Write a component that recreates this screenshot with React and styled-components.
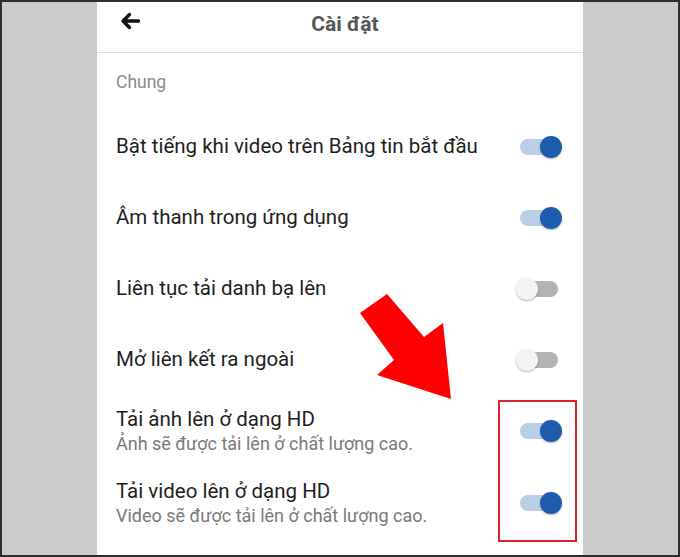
import React from "react";
import styled, { createGlobalStyle } from "styled-components";

const Global = createGlobalStyle`
  html, body { margin: 0; padding: 0; }
  body { font-family: Roboto, "Noto Sans", sans-serif; }
`;

const Frame = styled.div`
  width: 680px;
  height: 557px;
  box-sizing: border-box;
  border: 2px solid #2e2e2e;
  background: #cccccc;
  display: flex;
  overflow: hidden;
`;

const Panel = styled.div`
  position: relative;
  margin-left: 95px;
  width: 486px;
  background: #ffffff;
  display: flex;
  flex-direction: column;
`;

const Header = styled.div`
  height: 50px;
  border-bottom: 1px solid #dcdcdc;
  display: flex;
  align-items: center;
  position: relative;
  justify-content: center;
`;

const Back = styled.div`
  position: absolute;
  left: 22px;
  top: 8px;
  width: 22px;
  height: 22px;
  display: flex;
`;

const Title = styled.div`
  font-size: 21px;
  font-weight: 700;
  color: #565656;
  margin-left: 10px;
  margin-top: -7px;
`;

const SectionLabel = styled.div`
  height: 58px;
  display: flex;
  align-items: center;
  padding-left: 19px;
  font-size: 17.5px;
  color: #8a8a8a;
`;

const Row = styled.div`
  height: ${(p) => (p.$tall ? 72 : 71)}px;
  display: flex;
  align-items: center;
  justify-content: space-between;
  padding: 0 21px 0 19px;
`;

const Texts = styled.div`
  display: flex;
  flex-direction: column;
  gap: 3px;
`;

const Label = styled.div`
  font-size: 20.5px;
  color: #1e1e1e;
  line-height: 23px;
`;

const Sub = styled.div`
  font-size: 18px;
  color: #7a7a7a;
  line-height: 20px;
`;

const Switch = styled.div`
  position: relative;
  width: 46px;
  height: 24px;
  flex-shrink: 0;
  display: flex;
  align-items: center;
  justify-content: center;
`;

const Track = styled.div`
  width: 38px;
  height: 16px;
  border-radius: 8px;
  background: ${(p) => (p.$on ? "#bccde6" : "#b3b3b3")};
`;

const Knob = styled.div`
  position: absolute;
  top: 1px;
  left: ${(p) => (p.$on ? "24px" : "0px")};
  width: 22px;
  height: 22px;
  border-radius: 50%;
  background: ${(p) => (p.$on ? "#1d5cad" : "#f4f4f4")};
  box-shadow: 0 1px 2px rgba(0, 0, 0, 0.3);
`;

const Highlight = styled.div`
  position: absolute;
  left: 401px;
  top: 398px;
  width: 75px;
  height: 138px;
  border: 2px solid #d8232a;
  pointer-events: none;
`;

const Arrow = styled.svg`
  position: absolute;
  left: 0;
  top: 0;
  pointer-events: none;
`;

const Toggle = ({ on }) => (
  <Switch>
    <Track $on={on} />
    <Knob $on={on} />
  </Switch>
);

const rows = [
  { label: "Bật tiếng khi video trên Bảng tin bắt đầu", on: true },
  { label: "Âm thanh trong ứng dụng", on: true },
  { label: "Liên tục tải danh bạ lên", on: false },
  { label: "Mở liên kết ra ngoài", on: false },
  { label: "Tải ảnh lên ở dạng HD", sub: "Ảnh sẽ được tải lên ở chất lượng cao.", on: true },
  { label: "Tải video lên ở dạng HD", sub: "Video sẽ được tải lên ở chất lượng cao.", on: true },
];

export default function App() {
  return (
    <>
      <Global />
      <Frame>
        <Panel>
          <Header>
            <Back>
              <svg width="22" height="22" viewBox="0 0 22 22">
                <path
                  d="M19.5 11H4.5M10.5 4.5L4 11l6.5 6.5"
                  fill="none"
                  stroke="#111"
                  strokeWidth="3.4"
                  strokeLinecap="round"
                  strokeLinejoin="round"
                />
              </svg>
            </Back>
            <Title>Cài đặt</Title>
          </Header>
          <SectionLabel>Chung</SectionLabel>
          {rows.map((r, i) => (
            <Row key={i} $tall={!!r.sub}>
              <Texts>
                <Label>{r.label}</Label>
                {r.sub && <Sub>{r.sub}</Sub>}
              </Texts>
              <Toggle on={r.on} />
            </Row>
          ))}
          <Highlight />
          <Arrow width="486" height="555" viewBox="97 2 486 555">
            <polygon
              points="360,313 387,294 424,337 443,323 451,399 377,375 394,360"
              fill="#fe0000"
            />
          </Arrow>
        </Panel>
      </Frame>
    </>
  );
}
